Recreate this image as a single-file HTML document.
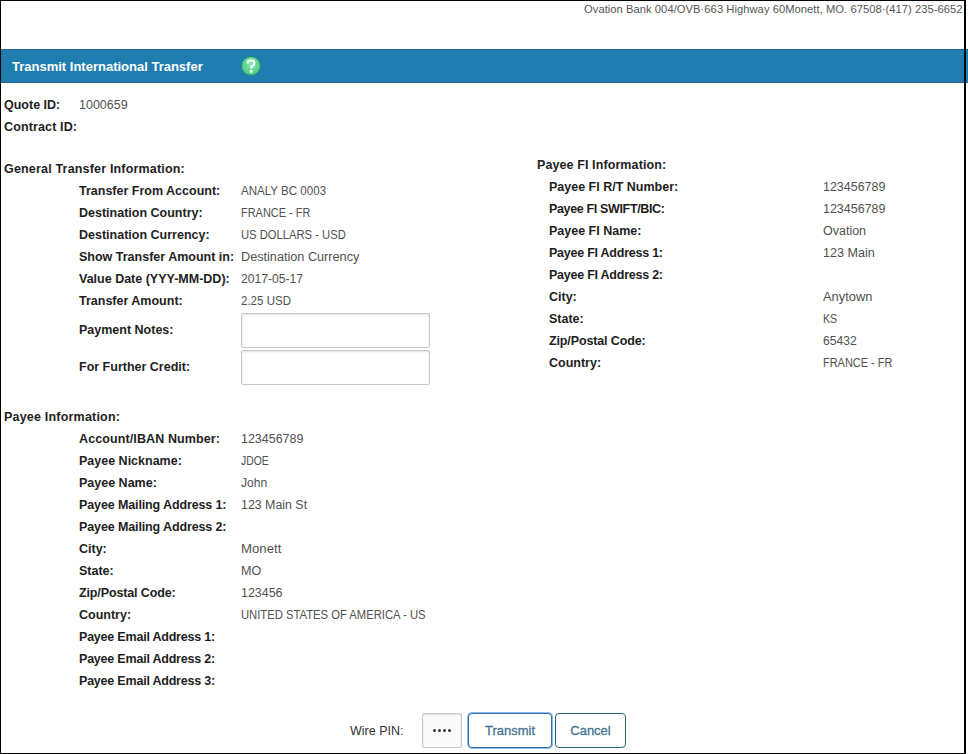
<!DOCTYPE html>
<html><head><meta charset="utf-8">
<style>
html,body{margin:0;padding:0;background:#fff;}
body{width:968px;height:754px;position:relative;overflow:hidden;font-family:"Liberation Sans",sans-serif;}
.frame{position:absolute;left:0;top:0;width:966px;height:754px;border-left:1px solid #000;border-top:1px solid #000;border-right:2px solid #000;border-bottom:1px solid #000;box-sizing:border-box;z-index:5;pointer-events:none}
span{position:absolute;white-space:nowrap;line-height:16px;}
.l{font-weight:bold;font-size:12.5px;color:#1e1e1e;}
.v{font-size:12px;color:#505050;}
.hdr{position:absolute;left:1px;top:49px;width:967px;height:34px;background:#1f7db0;border-top:1px solid #24658a;border-bottom:1px solid #24658a;box-sizing:border-box}
.title{color:#fff;font-weight:bold;font-size:13px;}
.help{position:absolute;left:241px;top:56px;width:20px;height:20px;}
.inp{position:absolute;left:241px;width:189px;height:35px;border:1px solid #c8c8c8;border-radius:2px;box-sizing:border-box;box-shadow:inset 0 1px 2px rgba(0,0,0,.12);background:#fff}
.dot{position:absolute;top:729px;width:3px;height:3px;border-radius:50%;background:#333}
.btn{position:absolute;top:713px;height:35px;box-sizing:border-box;border:1px solid #2f6f91;border-radius:4px;background:#fff;color:#44738f;font-size:13px;text-align:center;line-height:31px;-webkit-text-stroke:0.3px #44738f;}
</style></head><body>
<span class="v" style="left:584px;top:1px;font-size:11.2px;color:#555;letter-spacing:0.045px">Ovation Bank 004/OVB·663 Highway 60Monett, MO. 67508·(417) 235-6652</span>
<div class="hdr"></div>
<span class="title" style="left:12px;top:59px">Transmit International Transfer</span>
<svg class="help" viewBox="0 0 20 20"><defs><radialGradient id="g" cx="50%" cy="40%" r="60%"><stop offset="0" stop-color="#84e6ad"/><stop offset="1" stop-color="#4acb80"/></radialGradient></defs><circle cx="10" cy="10" r="9.5" fill="url(#g)" stroke="#1b8c74" stroke-width="1"/><path d="M6.7 7.4C6.7 5.3 8.2 4.4 10.1 4.4C12 4.4 13.4 5.5 13.4 7.2C13.4 8.9 12.2 9.5 11.2 10.2C10.5 10.7 10.2 11.2 10.2 12.6" fill="none" stroke="#fff" stroke-width="2.3"/><rect x="8.8" y="14.1" width="2.8" height="2.7" rx="0.6" fill="#fff"/></svg>
<span class="l" style="left:4px;top:97px">Quote ID:</span>
<span class="v" style="left:79px;top:97px;transform:scaleX(1.0400);transform-origin:0 0">1000659</span>
<span class="l" style="left:4px;top:119px;letter-spacing:0.130px">Contract ID:</span>
<span class="l" style="left:4px;top:161px;letter-spacing:0.180px">General Transfer Information:</span>
<span class="l" style="left:79px;top:183px">Transfer From Account:</span>
<span class="v" style="left:241px;top:183px;transform:scaleX(0.9636);transform-origin:0 0">ANALY BC 0003</span>
<span class="l" style="left:79px;top:205px">Destination Country:</span>
<span class="v" style="left:241px;top:205px;transform:scaleX(0.9135);transform-origin:0 0">FRANCE - FR</span>
<span class="l" style="left:79px;top:227px">Destination Currency:</span>
<span class="v" style="left:241px;top:227px;transform:scaleX(0.9351);transform-origin:0 0">US DOLLARS - USD</span>
<span class="l" style="left:79px;top:249px">Show Transfer Amount in:</span>
<span class="v" style="left:241px;top:249px;transform:scaleX(1.0559);transform-origin:0 0">Destination Currency</span>
<span class="l" style="left:79px;top:271px">Value Date (YYY-MM-DD):</span>
<span class="v" style="left:241px;top:271px;transform:scaleX(1.0098);transform-origin:0 0">2017-05-17</span>
<span class="l" style="left:79px;top:293px">Transfer Amount:</span>
<span class="v" style="left:241px;top:293px;transform:scaleX(0.9615);transform-origin:0 0">2.25 USD</span>
<span class="l" style="left:79px;top:322px">Payment Notes:</span>
<span class="l" style="left:79px;top:359px">For Further Credit:</span>
<span class="l" style="left:4px;top:409px;letter-spacing:0.200px">Payee Information:</span>
<span class="l" style="left:79px;top:431px;letter-spacing:0.110px">Account/IBAN Number:</span>
<span class="v" style="left:241px;top:431px;transform:scaleX(1.0390);transform-origin:0 0">123456789</span>
<span class="l" style="left:79px;top:453px">Payee Nickname:</span>
<span class="v" style="left:241px;top:453px;transform:scaleX(0.8656);transform-origin:0 0">JDOE</span>
<span class="l" style="left:79px;top:475px">Payee Name:</span>
<span class="v" style="left:241px;top:475px;transform:scaleX(1.0080);transform-origin:0 0">John</span>
<span class="l" style="left:79px;top:497px;letter-spacing:-0.120px">Payee Mailing Address 1:</span>
<span class="v" style="left:241px;top:497px;transform:scaleX(1.0317);transform-origin:0 0">123 Main St</span>
<span class="l" style="left:79px;top:519px;letter-spacing:-0.120px">Payee Mailing Address 2:</span>
<span class="l" style="left:79px;top:541px">City:</span>
<span class="v" style="left:241px;top:541px;transform:scaleX(1.1000);transform-origin:0 0">Monett</span>
<span class="l" style="left:79px;top:563px">State:</span>
<span class="v" style="left:241px;top:563px;transform:scaleX(1.0444);transform-origin:0 0">MO</span>
<span class="l" style="left:79px;top:585px;letter-spacing:-0.130px">Zip/Postal Code:</span>
<span class="v" style="left:241px;top:585px;transform:scaleX(1.0359);transform-origin:0 0">123456</span>
<span class="l" style="left:79px;top:607px">Country:</span>
<span class="v" style="left:241px;top:607px;transform:scaleX(0.9372);transform-origin:0 0">UNITED STATES OF AMERICA - US</span>
<span class="l" style="left:79px;top:629px;letter-spacing:-0.210px">Payee Email Address 1:</span>
<span class="l" style="left:79px;top:651px;letter-spacing:-0.210px">Payee Email Address 2:</span>
<span class="l" style="left:79px;top:673px;letter-spacing:-0.210px">Payee Email Address 3:</span>
<span class="l" style="left:537px;top:157px;letter-spacing:0.100px">Payee FI Information:</span>
<span class="l" style="left:549px;top:179px">Payee FI R/T Number:</span>
<span class="v" style="left:823px;top:179px;transform:scaleX(1.0390);transform-origin:0 0">123456789</span>
<span class="l" style="left:549px;top:201px;letter-spacing:-0.350px">Payee FI SWIFT/BIC:</span>
<span class="v" style="left:823px;top:201px;transform:scaleX(1.0390);transform-origin:0 0">123456789</span>
<span class="l" style="left:549px;top:223px">Payee FI Name:</span>
<span class="v" style="left:823px;top:223px;transform:scaleX(1.0415);transform-origin:0 0">Ovation</span>
<span class="l" style="left:549px;top:245px;letter-spacing:-0.240px">Payee FI Address 1:</span>
<span class="v" style="left:823px;top:245px;transform:scaleX(1.0500);transform-origin:0 0">123 Main</span>
<span class="l" style="left:549px;top:267px;letter-spacing:-0.240px">Payee FI Address 2:</span>
<span class="l" style="left:549px;top:289px">City:</span>
<span class="v" style="left:823px;top:289px;transform:scaleX(1.0733);transform-origin:0 0">Anytown</span>
<span class="l" style="left:549px;top:311px">State:</span>
<span class="v" style="left:823px;top:311px;transform:scaleX(0.8867);transform-origin:0 0">KS</span>
<span class="l" style="left:549px;top:333px;letter-spacing:-0.130px">Zip/Postal Code:</span>
<span class="v" style="left:823px;top:333px;transform:scaleX(1.0121);transform-origin:0 0">65432</span>
<span class="l" style="left:549px;top:355px">Country:</span>
<span class="v" style="left:823px;top:355px;transform:scaleX(0.9135);transform-origin:0 0">FRANCE - FR</span>
<div class="inp" style="top:313px"></div>
<div class="inp" style="top:350px"></div>
<span class="v" style="left:350px;top:723px;font-size:12.5px;color:#333">Wire PIN:</span>
<div class="inp" style="left:422px;top:713px;width:40px;height:35px;background:#fafafa"></div>
<div class="dot" style="left:433px"></div><div class="dot" style="left:438px"></div><div class="dot" style="left:443px"></div><div class="dot" style="left:448px"></div>
<div class="btn" style="left:468px;width:84px;border:1px solid #3b6ea3;box-shadow:0 0 0 1px #8bb8ee;line-height:33px">Transmit</div>
<div class="btn" style="left:555px;width:71px;border-color:#2c6379;line-height:33px">Cancel</div>
<div class="frame"></div>
</body></html>
